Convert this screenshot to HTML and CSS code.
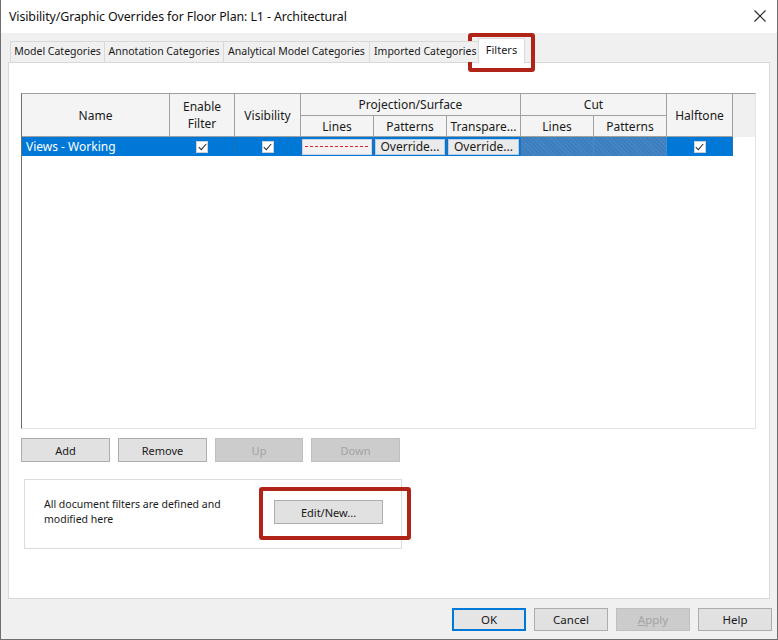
FILE: index.html
```html
<!DOCTYPE html>
<html>
<head>
<meta charset="utf-8">
<link rel="stylesheet" href="styles.css">
</head>
<body>
<div class="window">
  <header class="titlebar">
    <span class="title">Visibility/Graphic Overrides for Floor Plan: L1 - Architectural</span>
    <svg class="close" width="12" height="12" viewBox="0 0 12 12"><path d="M0.5 0.5L11.5 11.5M11.5 0.5L0.5 11.5" stroke="#222" stroke-width="1.1" fill="none"/></svg>
  </header>
  <div class="client">
    <div class="tabs">
      <div class="tab w1">Model Categories</div>
      <div class="tab w2">Annotation Categories</div>
      <div class="tab w3">Analytical Model Categories</div>
      <div class="tab w4">Imported Categories</div>
      <div class="tab active">Filters</div>
    </div>
    <div class="panel">
      <div class="grid">
        <div class="h span2">Name</div>
        <div class="h span2">Enable<br>Filter</div>
        <div class="h span2">Visibility</div>
        <div class="h span3">Projection/Surface</div>
        <div class="h span2c">Cut</div>
        <div class="h span2">Halftone</div>
        <div class="h span2 blank"></div>
        <div class="h">Lines</div>
        <div class="h">Patterns</div>
        <div class="h">Transpare...</div>
        <div class="h">Lines</div>
        <div class="h">Patterns</div>

        <div class="d name">Views - Working</div>
        <div class="d center"><span class="chk"><svg width="9" height="8" viewBox="0 0 9 8"><path d="M0.8 4.2L3.3 6.6L8.2 1" stroke="#333" stroke-width="1.1" fill="none"/></svg></span></div>
        <div class="d center"><span class="chk"><svg width="9" height="8" viewBox="0 0 9 8"><path d="M0.8 4.2L3.3 6.6L8.2 1" stroke="#333" stroke-width="1.1" fill="none"/></svg></span></div>
        <div class="d cellbtn"><span class="linebox"><span class="dash"></span></span></div>
        <div class="d cellbtn"><span class="ovr">Override...</span></div>
        <div class="d cellbtn"><span class="ovr">Override...</span></div>
        <div class="d hatch"></div>
        <div class="d hatch"></div>
        <div class="d center"><span class="chk"><svg width="9" height="8" viewBox="0 0 9 8"><path d="M0.8 4.2L3.3 6.6L8.2 1" stroke="#333" stroke-width="1.1" fill="none"/></svg></span></div>
        <div class="d empty"></div>
      </div>
      <div class="btnrow">
        <button class="btn w89">Add</button>
        <button class="btn w89">Remove</button>
        <button class="btn w88 disabled">Up</button>
        <button class="btn w89 disabled">Down</button>
      </div>
      <div class="group">
        <p class="grouptext">All document filters are defined and<br>modified here</p>
        <button class="btn editnew">Edit/New...</button>
      </div>
    </div>
    <div class="footer">
      <button class="btn fbtn ok">OK</button>
      <button class="btn fbtn">Cancel</button>
      <button class="btn fbtn disabled"><u>A</u>pply</button>
      <button class="btn fbtn">Help</button>
    </div>
  </div>
  <div class="mark mark-tab"></div>
  <div class="mark mark-edit"></div>
</div>
</body>
</html>
```

FILE: styles.css
```css
* { box-sizing: border-box; }
html, body { margin: 0; padding: 0; }
body {
  width: 778px;
  height: 640px;
  overflow: hidden;
  font-family: "Noto Sans", "Open Sans", sans-serif;
  color: #1a1a1a;
}
.window {
  position: relative;
  width: 778px;
  height: 640px;
  background: #f0f0f0;
  border-left: 1px solid #6e6e6e;
  border-right: 1px solid #6e6e6e;
  border-bottom: 1px solid #6e6e6e;
  display: flex;
  flex-direction: column;
}
.titlebar {
  height: 33px;
  background: #ffffff;
  display: flex;
  align-items: center;
  justify-content: space-between;
  padding: 0 11px 0 8px;
  flex-shrink: 0;
}
.title {
  font-size: 12.4px;
  color: #111;
  letter-spacing: -0.1px;
}
.close { margin-top: -1px; }
.client {
  flex: 1;
  display: flex;
  flex-direction: column;
}
.tabs {
  display: flex;
  align-items: flex-end;
  height: 29px;
  padding-left: 9px;
  position: relative;
  z-index: 2;
}
.tab {
  height: 21px;
  border: 1px solid #d9d9d9;
  border-bottom: none;
  margin-right: -1px;
  background: #f0f0f0;
  font-size: 10.5px;
  line-height: 19px;
  text-align: center;
  white-space: nowrap;
  overflow: hidden;
}
.w1 { width: 95px; }
.w2 { width: 120px; }
.w3 { width: 147px; }
.w4 { width: 110px; text-align: left; padding-left: 4px; }
.tab.active {
  width: 47px;
  height: 25px;
  margin-bottom: -1px;
  background: #ffffff;
  line-height: 22px;
  font-size: 11px;
  border-color: #d9d9d9;
}
.panel {
  margin-left: 7px;
  width: 762px;
  height: 537px;
  background: #ffffff;
  border: 1px solid #d9d9d9;
  padding: 30px 0 0 12px;
  display: flex;
  flex-direction: column;
}
.grid {
  width: 735px;
  height: 336px;
  border-top: 1px solid #a0a0a0;
  border-left: 1px solid #6d6d6d;
  border-right: 1px solid #e3e3e3;
  border-bottom: 1px solid #e3e3e3;
  display: grid;
  grid-template-columns: 148px 65px 66px 73px 73px 74px 73px 73px 66px 22px;
  grid-template-rows: 22px 21px 19px;
  align-content: start;
  background: #fff;
}
.h {
  background: #f4f4f4;
  border-right: 1px solid #a0a0a0;
  border-bottom: 1px solid #a0a0a0;
  font-size: 12px;
  display: flex;
  align-items: center;
  justify-content: center;
  text-align: center;
  line-height: 17px;
  color: #1a1a1a;
  white-space: nowrap;
}
.span2 { grid-row: span 2; }
.span3 { grid-column: span 3; }
.span2c { grid-column: span 2; }
.h.blank { border-right: none; border-bottom: none; background: #f0f0f0; }
.d {
  background: #0078d7;
  border-right: 1px solid #2a6fb0;
  display: flex;
  align-items: center;
}
.d.name {
  color: #fff;
  font-size: 12px;
  padding-left: 4px;
  border-right-color: #0078d7;
}
.d.center { justify-content: center; }
.d.cellbtn { padding: 1px 1px 1px 1px; }
.d.empty { background: #fff; border-right: none; }
.d.hatch {
  background-color: #3c7fc0;
  background-image: repeating-linear-gradient(45deg, rgba(255,255,255,0.06) 0 1px, transparent 1px 3px);
  border-right-color: #4b8ac8;
}
.chk {
  width: 12px;
  height: 12px;
  background: #fff;
  border: 1px solid #d0d0d0;
  display: flex;
  align-items: center;
  justify-content: center;
}
.linebox {
  width: 100%;
  height: 16px;
  background: #f2f2f2;
  border: 1px solid #c9d6e3;
  display: flex;
  align-items: center;
  padding: 0 2px;
}
.dash {
  width: 100%;
  height: 1px;
  background-image: repeating-linear-gradient(90deg, #e0202a 0 3px, transparent 3px 5px);
}
.ovr {
  width: 100%;
  height: 16px;
  background: #ebebeb;
  border: 1px solid #b5cde6;
  font-size: 12px;
  line-height: 14px;
  text-align: center;
  color: #1a1a1a;
}
.btnrow {
  display: flex;
  gap: 8px;
  margin-top: 9px;
}
.btn {
  font-family: "Noto Sans", "Open Sans", sans-serif;
  font-size: 11px;
  height: 24px;
  background: #e1e1e1;
  border: 1px solid #adadad;
  color: #1a1a1a;
  padding: 0;
  margin: 0;
}
.w89 { width: 89px; }
.w88 { width: 88px; }
.btn.disabled {
  background: #cccccc;
  border-color: #bfbfbf;
  color: #a3a3a3;
}
.group {
  margin-top: 17px;
  margin-left: 3px;
  width: 378px;
  height: 70px;
  border: 1px solid #dcdcdc;
  display: flex;
  align-items: flex-start;
}
.grouptext {
  margin: 17px 0 0 19px;
  font-size: 10.5px;
  line-height: 14.5px;
  width: 230px;
}
.editnew {
  width: 109px;
  margin-top: 20px;
}
.footer {
  display: flex;
  justify-content: flex-end;
  gap: 8px;
  padding: 9px 5px 0 0;
}
.fbtn {
  width: 74px;
  height: 23px;
  font-size: 11.5px;
}
.fbtn.ok { border: 1px solid #0078d7; box-shadow: inset 0 0 0 1px #0078d7; background: #e5e5e5; }
.mark {
  position: absolute;
  border: 4px solid #b02418;
  border-radius: 3px;
}
.mark-tab { left: 467px; top: 33px; width: 67px; height: 39px; }
.mark-edit { left: 258px; top: 487px; width: 152px; height: 53px; }
```
